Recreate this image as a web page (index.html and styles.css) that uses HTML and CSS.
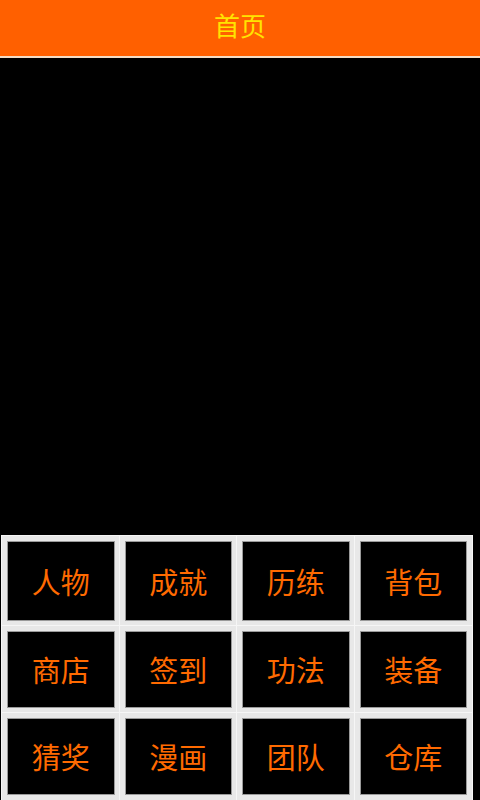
FILE: index.html
```html
<!DOCTYPE html>
<html lang="zh">
<head>
<meta charset="utf-8">
<title>首页</title>
<link rel="stylesheet" href="styles.css">
</head>
<body>
<div class="page">
  <header class="topbar"><h1 class="title">首页</h1></header>
  <main class="stage"></main>
  <nav class="menu">
    <div class="cell">人物</div>
    <div class="cell">成就</div>
    <div class="cell">历练</div>
    <div class="cell">背包</div>
    <div class="cell">商店</div>
    <div class="cell">签到</div>
    <div class="cell">功法</div>
    <div class="cell">装备</div>
    <div class="cell">猜奖</div>
    <div class="cell">漫画</div>
    <div class="cell">团队</div>
    <div class="cell">仓库</div>
  </nav>
</div>
</body>
</html>
```
FILE: styles.css
```css
html, body {
  margin: 0;
  padding: 0;
  background: #000;
}
.page {
  width: 480px;
  height: 800px;
  display: flex;
  flex-direction: column;
  font-family: "Noto Sans CJK SC", "Noto Sans", sans-serif;
  overflow: hidden;
}
.topbar {
  height: 58px;
  box-sizing: border-box;
  padding-bottom: 6px;
  flex: none;
  background: #ff6000;
  border-bottom: 2px solid #f3dcc4;
  display: flex;
  align-items: center;
  justify-content: center;
}
.title {
  margin: 0;
  font-size: 26px;
  font-weight: 400;
  color: #ffe400;
  line-height: 1;
}
.stage {
  flex: 1;
  background: #000;
}
.menu {
  flex: none;
  height: 264px;
  padding: 0 8px 0 2px;
  display: grid;
  grid-template-columns: repeat(4, 1fr);
  grid-template-rows: 90px 87px 87px;
}
.cell {
  border: 5px solid #e8e8e8;
  box-shadow: inset 0 0 0 1px #9a9a9a, 0 0 0 1px #f6f6f6;
  background: #000;
  color: #ff6a00;
  font-size: 29px;
  display: flex;
  align-items: center;
  justify-content: center;
  line-height: 1;
}
```
